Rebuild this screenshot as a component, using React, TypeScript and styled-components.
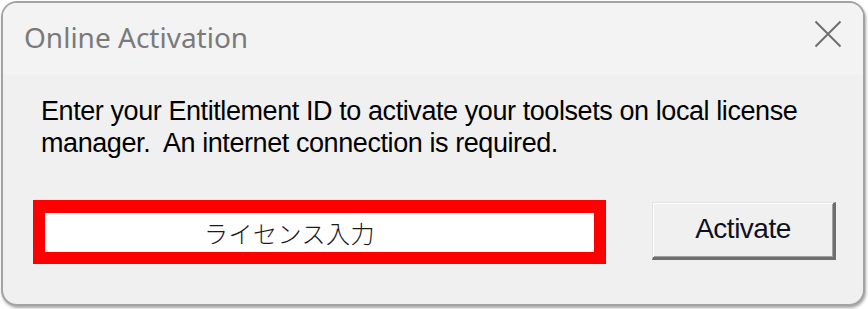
import React from "react";
import styled, { createGlobalStyle } from "styled-components";

const GlobalStyle = createGlobalStyle`
  html, body { margin: 0; padding: 0; background: #ffffff; }
  body { width: 868px; height: 309px; overflow: hidden; }
`;

const Window = styled.div`
  box-sizing: border-box;
  margin: 1px 0 0 1px;
  width: 864px;
  height: 305px;
  border: 2px solid #a3a3a3;
  border-radius: 16px;
  overflow: hidden;
  background: #f0f0f0;
  display: flex;
  flex-direction: column;
  box-shadow: 1px 2px 3px rgba(0, 0, 0, 0.35);
`;

const TitleBar = styled.div`
  height: 72px;
  flex: none;
  background: #f3f3f3;
  display: flex;
  align-items: center;
  justify-content: space-between;
  padding: 0 21px 0 21px;
`;

const Title = styled.div`
  font-family: "Noto Sans", "Open Sans", sans-serif;
  font-size: 28px;
  color: #7a7a7a;
  margin-top: -4px;
`;

const CloseButton = styled.div`
  width: 28px;
  height: 28px;
  display: flex;
  align-items: center;
  justify-content: center;
  margin-top: -10px;
`;

const Body = styled.div`
  flex: 1;
  display: flex;
  flex-direction: column;
  padding: 20px 20px 0 38px;
`;

const Message = styled.p`
  margin: 0;
  font-family: "Liberation Sans", Arial, sans-serif;
  font-size: 27px;
  line-height: 32px;
  letter-spacing: -0.42px;
  color: #000;
  width: 810px;
`;

const ActionRow = styled.div`
  display: flex;
  align-items: center;
  margin-top: 41px;
  margin-left: -8px;
`;

const HighlightBox = styled.div`
  box-sizing: border-box;
  width: 573px;
  height: 64px;
  border: 12px solid #ff0000;
  border-top-width: 13px;
  background: #ffffff;
  display: flex;
  align-items: center;
  padding-left: 159px;
`;

const LicenseText = styled.span`
  font-family: "Noto Sans CJK JP", sans-serif;
  font-weight: 300;
  font-size: 24px;
  letter-spacing: 0.5px;
  color: #1a1a1a;
`;

const ActivateButton = styled.button`
  box-sizing: border-box;
  margin-left: 46px;
  margin-top: -3px;
  width: 184px;
  height: 58px;
  background: #f0f0f0;
  border-style: solid;
  border-width: 1px 3px 3px 1px;
  border-color: #e3e3e3 #6e6e6e #6e6e6e #e3e3e3;
  box-shadow: inset 1px 1px 0 #ffffff, inset -1px -1px 0 #a0a0a0;
  font-family: "Liberation Sans", Arial, sans-serif;
  font-size: 28px;
  letter-spacing: -0.5px;
  color: #101020;
  padding: 0 0 2px 0;
  cursor: default;
`;

export default function App() {
  return (
    <>
      <GlobalStyle />
      <Window>
        <TitleBar>
          <Title>Online Activation</Title>
          <CloseButton>
            <svg width="28" height="28" viewBox="0 0 28 28">
              <path d="M1.5 1.5 L26.5 26.5 M26.5 1.5 L1.5 26.5" stroke="#6f6f6f" strokeWidth="2" fill="none" />
            </svg>
          </CloseButton>
        </TitleBar>
        <Body>
          <Message>
            Enter your Entitlement ID to activate your toolsets on local license manager.&nbsp; An internet connection is required.
          </Message>
          <ActionRow>
            <HighlightBox>
              <LicenseText>ライセンス入力</LicenseText>
            </HighlightBox>
            <ActivateButton>Activate</ActivateButton>
          </ActionRow>
        </Body>
      </Window>
    </>
  );
}
